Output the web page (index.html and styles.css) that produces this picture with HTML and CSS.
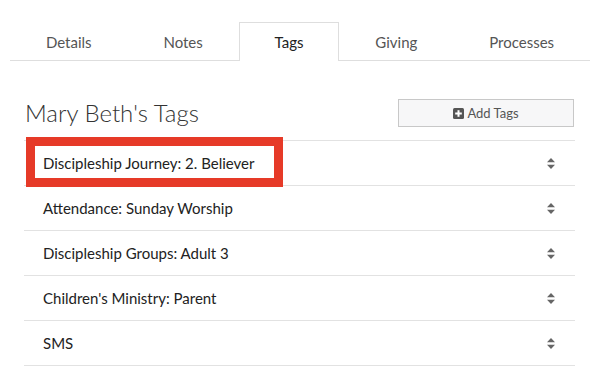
FILE: index.html
```html
<!DOCTYPE html>
<html>
<head>
<meta charset="utf-8">
<link rel="stylesheet" href="styles.css">
</head>
<body>
<nav class="tabs">
  <div class="tab">Details</div>
  <div class="tab">Notes</div>
  <div class="tab active">Tags</div>
  <div class="tab">Giving</div>
  <div class="tab">Processes</div>
</nav>
<div class="header">
  <h1 class="title">Mary Beth's Tags</h1>
  <button class="add-btn">
    <svg class="plus" width="11" height="11" viewBox="0 0 11 11"><rect x="0" y="0" width="11" height="11" rx="1.5" fill="#555"/><rect x="2.2" y="4.5" width="6.6" height="2" fill="#fff"/><rect x="4.5" y="2.2" width="2" height="6.6" fill="#fff"/></svg>
    <span>Add Tags</span>
  </button>
</div>
<ul class="list">
  <li class="row"><span class="label">Discipleship Journey: 2. Believer</span><svg class="sort" width="8" height="11" viewBox="0 0 8 11"><path d="M0 4.3 L4 0 L8 4.3 Z M0 6.7 L8 6.7 L4 11 Z" fill="#666"/></svg><div class="highlight"></div></li>
  <li class="row"><span class="label">Attendance: Sunday Worship</span><svg class="sort" width="8" height="11" viewBox="0 0 8 11"><path d="M0 4.3 L4 0 L8 4.3 Z M0 6.7 L8 6.7 L4 11 Z" fill="#666"/></svg></li>
  <li class="row"><span class="label">Discipleship Groups: Adult 3</span><svg class="sort" width="8" height="11" viewBox="0 0 8 11"><path d="M0 4.3 L4 0 L8 4.3 Z M0 6.7 L8 6.7 L4 11 Z" fill="#666"/></svg></li>
  <li class="row"><span class="label">Children's Ministry: Parent</span><svg class="sort" width="8" height="11" viewBox="0 0 8 11"><path d="M0 4.3 L4 0 L8 4.3 Z M0 6.7 L8 6.7 L4 11 Z" fill="#666"/></svg></li>
  <li class="row"><span class="label">SMS</span><svg class="sort" width="8" height="11" viewBox="0 0 8 11"><path d="M0 4.3 L4 0 L8 4.3 Z M0 6.7 L8 6.7 L4 11 Z" fill="#666"/></svg></li>
</ul>
</body>
</html>
```
FILE: styles.css
```css
* { box-sizing: border-box; }
html, body { margin: 0; padding: 0; background: #fff; }
body {
  font-family: Lato, "Open Sans", sans-serif;
  color: #333;
  width: 600px;
  height: 381px;
  overflow: hidden;
}
.tabs {
  display: flex;
  margin: 22px 10px 0 10px;
  border-bottom: 1px solid #dedede;
  height: 39px;
}
.tab {
  flex: 1 1 auto;
  text-align: center;
  font-size: 15px;
  color: #555;
  line-height: 38px;
  border: 1px solid transparent;
  border-bottom: none;
}
.tab.active {
  color: #222;
  border-color: #dedede;
  background: #fff;
  height: 39px;
  margin-bottom: -1px;
}
.header {
  display: flex;
  justify-content: space-between;
  align-items: center;
  margin: 38px 25px 0 25px;
}
.title {
  margin: 0;
  font-size: 24px;
  font-weight: 300;
  color: #333;
  line-height: 28px;
}
.add-btn {
  width: 176px;
  height: 28px;
  margin-right: 1px;
  border: 1px solid #c8c8c8;
  background: #f7f7f8;
  font-family: Lato, sans-serif;
  font-size: 13px;
  color: #555;
  display: flex;
  align-items: center;
  justify-content: center;
  gap: 3px;
  padding: 0;
}
.list {
  list-style: none;
  margin: 13px 25px 0 24px;
  padding: 0;
  border-bottom: 1px solid #e2e2e2;
}
.row {
  position: relative;
  height: 45px;
  border-top: 1px solid #e2e2e2;
  display: flex;
  align-items: center;
  justify-content: space-between;
  padding: 0 20px 0 19px;
  font-size: 15px;
  color: #222;
}
.sort { display: block; }
.highlight {
  position: absolute;
  z-index: 1;
  left: 2px;
  top: -4px;
  width: 257px;
  height: 50px;
  border: 9px solid #e63a28;
  pointer-events: none;
}
```
